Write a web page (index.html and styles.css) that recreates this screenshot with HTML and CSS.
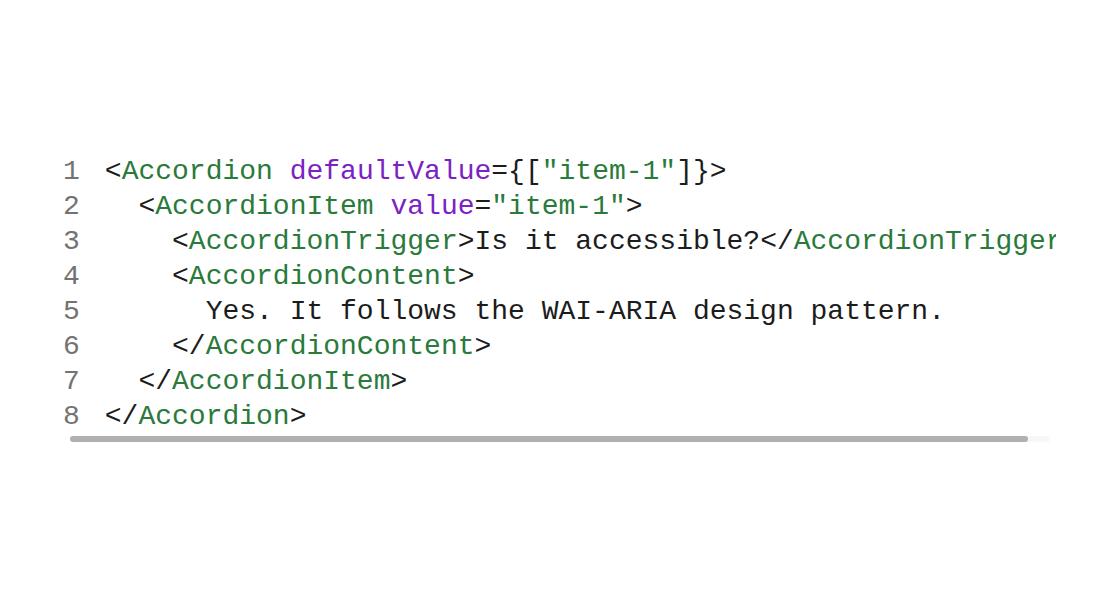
FILE: index.html
```html
<!DOCTYPE html>
<html lang="en">
<head>
<meta charset="utf-8">
<title>Code</title>
<link rel="stylesheet" href="styles.css">
</head>
<body>
<div class="page">
  <div class="code-block">
    <div class="viewport">
      <div class="gutter">
        <span>1</span><span>2</span><span>3</span><span>4</span><span>5</span><span>6</span><span>7</span><span>8</span>
      </div>
      <pre class="code"><span class="p">&lt;</span><span class="t">Accordion</span> <span class="a">defaultValue</span><span class="p">={[</span><span class="s">"item-1"</span><span class="p">]}&gt;</span>
  <span class="p">&lt;</span><span class="t">AccordionItem</span> <span class="a">value</span><span class="p">=</span><span class="s">"item-1"</span><span class="p">&gt;</span>
    <span class="p">&lt;</span><span class="t">AccordionTrigger</span><span class="p">&gt;</span>Is it accessible?<span class="p">&lt;/</span><span class="t">AccordionTrigger</span><span class="p">&gt;</span>
    <span class="p">&lt;</span><span class="t">AccordionContent</span><span class="p">&gt;</span>
      Yes. It follows the WAI-ARIA design pattern.
    <span class="p">&lt;/</span><span class="t">AccordionContent</span><span class="p">&gt;</span>
  <span class="p">&lt;/</span><span class="t">AccordionItem</span><span class="p">&gt;</span>
<span class="p">&lt;/</span><span class="t">Accordion</span><span class="p">&gt;</span></pre>
    </div>
    <div class="scrollbar"><div class="thumb" style="width: 958px"></div></div>
  </div>
</div>
</body>
</html>
```

FILE: styles.css
```css
html, body {
  margin: 0;
  padding: 0;
  background: #ffffff;
}

.page {
  width: 1120px;
  height: 600px;
  padding-top: 154px;
  box-sizing: border-box;
}

.code-block {
  margin-left: 56px;
  width: 1000px;
}

.viewport {
  display: flex;
  gap: 25px;
  overflow: hidden;
  font-family: "Liberation Mono", "DejaVu Sans Mono", monospace;
  font-size: 28px;
  line-height: 35px;
}

.gutter {
  display: flex;
  flex-direction: column;
  padding-left: 7px;
  color: #737373;
  text-align: right;
  flex: none;
}

.code {
  margin: 0;
  font: inherit;
  white-space: pre;
  color: #1c1c1c;
  flex: none;
}

.t, .s { color: #2a7a3b; }
.a { color: #7b22c4; }
.p { color: #1c1c1c; }

.scrollbar {
  margin: 2px 6px 0 14px;
  height: 6px;
  border-radius: 3px;
  background: #f7f7f7;
}

.thumb {
  height: 6px;
  border-radius: 3px;
  background: #b0b0b0;
}
```
